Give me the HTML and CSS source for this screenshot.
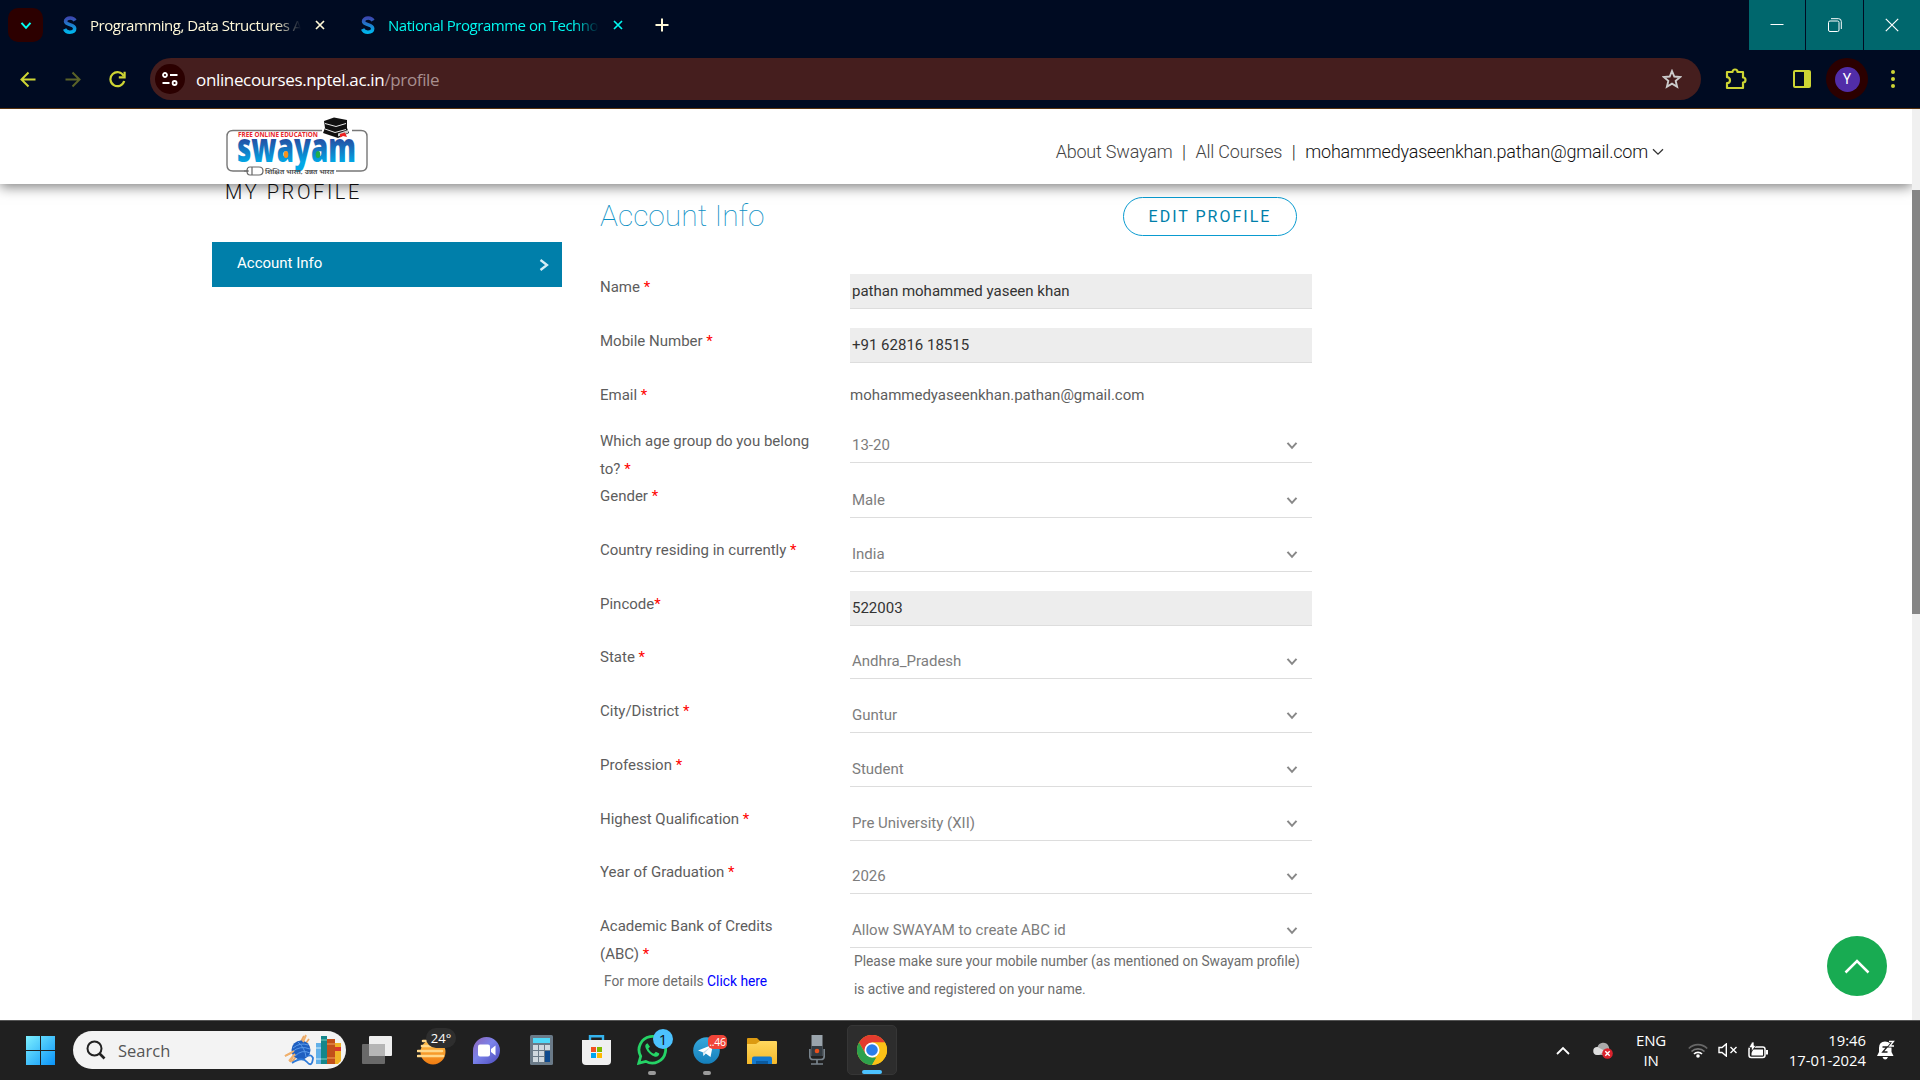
FILE: index.html
```html
<!DOCTYPE html>
<html lang="en">
<head>
<meta charset="utf-8">
<title>Profile</title>
<link rel="stylesheet" href="styles.css">
</head>
<body>
<svg width="0" height="0" class="defs">
  <defs>
    <linearGradient id="sblue" x1="0" y1="0" x2="0" y2="1"><stop offset="0" stop-color="#3b49b0"/><stop offset="1" stop-color="#00b4ec"/></linearGradient>
    <linearGradient id="wordmark" x1="0" y1="0" x2="0" y2="1"><stop offset=".3" stop-color="#2b3f98"/><stop offset=".8" stop-color="#00a8e6"/></linearGradient>
    <linearGradient id="win" x1="0" y1="0" x2="1" y2="1"><stop offset="0" stop-color="#7df0ff"/><stop offset="1" stop-color="#0a93f8"/></linearGradient>
    <linearGradient id="sun" x1="0" y1="0" x2="0" y2="1"><stop offset="0" stop-color="#ffc24a"/><stop offset="1" stop-color="#f07c12"/></linearGradient>
    <linearGradient id="chat" x1="0" y1="0" x2="1" y2="1"><stop offset="0" stop-color="#8f62b4"/><stop offset=".45" stop-color="#7b83eb"/><stop offset="1" stop-color="#4a49ba"/></linearGradient>
    <linearGradient id="tele" x1="0" y1="0" x2="0" y2="1"><stop offset="0" stop-color="#36a8dc"/><stop offset="1" stop-color="#157fbb"/></linearGradient>
    <linearGradient id="fold" x1="0" y1="0" x2="0" y2="1"><stop offset="0" stop-color="#ffd75e"/><stop offset="1" stop-color="#f5b92a"/></linearGradient>
    <symbol id="vee" viewBox="0 0 12 10"><path d="M1.500 2.800 6 7.800 10.500 2.800" fill="none" stroke="currentColor" stroke-width="2"/></symbol>
    <symbol id="ess" viewBox="0 0 14 18"><path d="M12 4.600C11 2.600 9.200 2 7.200 2 4.600 2 2.500 3.200 2.500 5.300 2.500 9.500 11.700 7.800 11.700 12.600 11.700 15 9.500 16.200 6.800 16.200 4.300 16.200 2.500 15.200 1.600 13" fill="none" stroke="url(#sblue)" stroke-width="3.500"/></symbol>
    <symbol id="cross" viewBox="0 0 10 10"><path d="M1 1 9 9M9 1 1 9" fill="none" stroke="currentColor" stroke-width="1.700"/></symbol>
  </defs>
</svg>

<div class="browser">
  <div class="tabstrip">
    <div class="tab-search"><svg width="12" height="10"><use href="#vee"/></svg></div>
    <div class="tab">
      <svg width="14" height="18"><use href="#ess"/></svg>
      <span class="tab-title">Programming, Data Structures And</span>
      <svg class="close" width="10" height="10"><use href="#cross"/></svg>
    </div>
    <div class="tab active">
      <svg width="14" height="18"><use href="#ess"/></svg>
      <span class="tab-title">National Programme on Technology</span>
      <svg class="close" width="10" height="10"><use href="#cross"/></svg>
    </div>
    <svg class="new-tab" width="14" height="14" viewBox="0 0 14 14"><path d="M7 0.500V13.500M.5 7H13.500" stroke="#fff9d8" stroke-width="2"/></svg>
    <div class="win-buttons">
      <div class="win-button"><svg width="14" height="14" viewBox="0 0 14 14"><path d="M.5 6.500H13.500" stroke="#fff"/></svg></div>
      <div class="win-button"><svg width="14" height="14" viewBox="0 0 14 14" fill="none" stroke="#fff"><rect x=".5" y="3" width="10.500" height="10.500" rx="1.500"/><path d="M3 .7H10.500Q13.300 .7 13.300 3.500V11"/></svg></div>
      <div class="win-button"><svg width="14" height="14" viewBox="0 0 14 14"><path d="M.8 .8 13.200 13.200M13.200 .8 .8 13.200" stroke="#fff" stroke-width="1.200"/></svg></div>
    </div>
  </div>
  <div class="toolbar">
    <svg class="back" width="16" height="17" viewBox="0 0 16 17" fill="none" stroke="#cdd534" stroke-width="2"><path d="M15.500 8.500H2M8.500 1.500 1.500 8.500 8.500 15.500"/></svg>
    <svg class="forward" width="16" height="17" viewBox="0 0 16 17" fill="none" stroke="#5b6328" stroke-width="2"><path d="M.5 8.500H14M7.500 1.500 14.500 8.500 7.500 15.500"/></svg>
    <svg class="reload" width="17" height="17" viewBox="0 0 17 17" fill="none" stroke="#cdd534" stroke-width="2.200"><path d="M14.700 5A7 7 0 1 0 15.200 10"/><path d="M15.600 .8V6.400H9.800"/></svg>
    <div class="address">
      <div class="site-info"><svg width="16" height="14" viewBox="0 0 16 14" fill="none" stroke="#fff" stroke-width="1.800"><circle cx="3" cy="3" r="2"/><path d="M8 3H15.500M.5 11H7.500"/><circle cx="12.600" cy="11" r="2"/></svg></div>
      <span class="url">onlinecourses.nptel.ac.in<span class="path">/profile</span></span>
      <svg class="star" width="20" height="20" viewBox="0 0 20 20"><path d="M10 2 12.300 7.500 18.300 8 13.700 11.900 15.100 17.700 10 14.600 4.900 17.700 6.300 11.900 1.700 8 7.700 7.500Z" fill="none" stroke="#ccc" stroke-width="1.900"/></svg>
    </div>
    <svg class="puzzle" width="22" height="22" viewBox="0 0 22 22"><path d="M2 4H7.500A2.400 2.400 0 0 1 12.500 4H18V9.500A2.400 2.400 0 0 1 18 14.500V20H2V15.200A3 3 0 0 0 2 9.200Z" fill="none" stroke="#cdd534" stroke-width="2.200" stroke-linejoin="round"/></svg>
    <svg class="panel" width="18" height="18" viewBox="0 0 18 18"><rect x="1" y="1" width="16" height="16" rx="1" fill="none" stroke="#cdd534" stroke-width="2"/><path d="M11 1H17V17H11Z" fill="#cdd534"/></svg>
    <div class="avatar"><span>Y</span></div>
    <svg class="dots" width="4" height="18" viewBox="0 0 4 18" fill="#cdd534"><circle cx="2" cy="2" r="2"/><circle cx="2" cy="9" r="2"/><circle cx="2" cy="16" r="2"/></svg>
  </div>
</div>

<div class="viewport">
  <div class="page">
    <header class="site-header">
      <svg class="logo" width="144" height="62" viewBox="0 0 144 62">
        <path d="M96 14.500H7Q1 14.500 1 20.500V49Q1 55 7 55H22M110 55H135Q141 55 141 49V20.500Q141 14.500 135 14.500H126" fill="none" stroke="#777" stroke-width="1.400"/>
        <text class="logo-top" x="12" y="21" textLength="80" lengthAdjust="spacingAndGlyphs">FREE ONLINE EDUCATION</text>
        <text class="logo-word" x="11" y="45.500" textLength="119" lengthAdjust="spacingAndGlyphs">swayam</text>
        <ellipse cx="60" cy="38.500" rx="2.300" ry="3.500" fill="#f7931e"/><ellipse cx="92" cy="38.500" rx="2.300" ry="3.500" fill="#22ac4a"/>
        <path d="M98 5 108 1.500 121 4V12L123 17 112 22 97 17 99 12Z" fill="#111"/>
        <path d="M99 7.500 110 10.500 120 7.500M99 13 109 16.500 120 13.500" stroke="#fff" stroke-width=".9" fill="none"/>
        <path d="M112 20.500V17.500L122 14V17Z" fill="#ccc"/>
        <path d="M114 18 119 16.500 121 21 117 20 114 21.500Z" fill="#e22"/>
        <path d="M24 51H33Q37 51 37 55T33 59H24Q21 59 21 55T24 51ZM26 51V59M18 55H23" fill="none" stroke="#666" stroke-width="1.200"/>
        <text class="logo-tag" x="39" y="57.500" textLength="69" lengthAdjust="spacingAndGlyphs">शिक्षित भारत, उन्नत भारत</text>
      </svg>
      <nav class="site-nav">
        <span class="nav-about">About Swayam</span><span class="bar">|</span><span class="nav-courses">All Courses</span><span class="bar">|</span><span class="nav-user">mohammedyaseenkhan.pathan@gmail.com</span>
        <svg width="12" height="8" viewBox="0 0 12 8"><path d="M1 1.200 6 6.200 11 1.200" fill="none" stroke="#333" stroke-width="1.300"/></svg>
      </nav>
    </header>

    <main class="content">
      <aside class="sidebar">
        <h1>MY PROFILE</h1>
        <div class="side-item"><span>Account Info</span><svg width="10" height="14" viewBox="0 0 10 14"><path d="M1.500 2 8 7 1.500 12" fill="none" stroke="#d5eef5" stroke-width="2.300"/></svg></div>
      </aside>
      <section class="form">
        <div class="form-head"><h2>Account Info</h2><div class="edit">EDIT PROFILE</div></div>
        <div class="row"><div class="label">Name <i>*</i></div><div class="field filled">pathan mohammed yaseen khan</div></div>
        <div class="row"><div class="label">Mobile Number <i>*</i></div><div class="field filled">+91 62816 18515</div></div>
        <div class="row h46"><div class="label">Email <i>*</i></div><div class="plain">mohammedyaseenkhan.pathan@gmail.com</div></div>
        <div class="row h55"><div class="label">Which age group do you belong to? <i>*</i></div><div class="field">13-20<svg width="12" height="10"><use href="#vee"/></svg></div></div>
        <div class="row"><div class="label">Gender <i>*</i></div><div class="field">Male<svg width="12" height="10"><use href="#vee"/></svg></div></div>
        <div class="row"><div class="label">Country residing in currently <i>*</i></div><div class="field">India<svg width="12" height="10"><use href="#vee"/></svg></div></div>
        <div class="row h53"><div class="label">Pincode<i>*</i></div><div class="field filled">522003</div></div>
        <div class="row"><div class="label">State <i>*</i></div><div class="field">Andhra_Pradesh<svg width="12" height="10"><use href="#vee"/></svg></div></div>
        <div class="row"><div class="label">City/District <i>*</i></div><div class="field">Guntur<svg width="12" height="10"><use href="#vee"/></svg></div></div>
        <div class="row"><div class="label">Profession <i>*</i></div><div class="field">Student<svg width="12" height="10"><use href="#vee"/></svg></div></div>
        <div class="row h53"><div class="label">Highest Qualification <i>*</i></div><div class="field">Pre University (XII)<svg width="12" height="10"><use href="#vee"/></svg></div></div>
        <div class="row"><div class="label">Year of Graduation <i>*</i></div><div class="field">2026<svg width="12" height="10"><use href="#vee"/></svg></div></div>
        <div class="row">
          <div class="label">Academic Bank of Credits<br>(ABC) <i>*</i><div class="details">For more details <a>Click here</a></div></div>
          <div><div class="field">Allow SWAYAM to create ABC id<svg width="12" height="10"><use href="#vee"/></svg></div>
          <div class="help">Please make sure your mobile number (as mentioned on Swayam profile)<br>is active and registered on your name.</div></div>
        </div>
      </section>
    </main>
    <div class="to-top"><svg width="26" height="15" viewBox="0 0 26 15"><path d="M1.500 13.500 13 2 24.500 13.500" fill="none" stroke="#fff" stroke-width="2.500"/></svg></div>
  </div>
  <div class="scrollbar"><div class="thumb"></div></div>
</div>

<div class="taskbar">
  <svg class="start" width="29" height="29" viewBox="0 0 29 29"><path d="M0 0H14V14H0ZM15 0H29V14H15ZM0 15H14V29H0ZM15 15H29V29H15Z" fill="url(#win)"/></svg>
  <div class="search">
    <svg width="20" height="20" viewBox="0 0 20 20" fill="none" stroke="#222" stroke-width="2"><circle cx="8.500" cy="8.500" r="7"/><path d="M13.500 13.500 18.500 18.500" stroke-width="2.600"/></svg>
    <span>Search</span>
    <svg class="art" width="57" height="32" viewBox="0 0 57 32">
      <path d="M20 2 6 28M25 5 8 28M1 22 24 11" stroke="#e9a765" stroke-width="1.800"/><circle cx="17" cy="16" r="9.500" fill="#1f5fc0"/><path d="M9 14Q16 8 24 11M8 18Q16 11 26 15M11 22Q18 15 26 19M14 8Q21 14 22 23" stroke="#5b9bea" fill="none"/>
      <path d="M8 29Q18 22 23 28T29 24Q27 20 24 22" fill="none" stroke="#2e7bd9" stroke-width="1.800"/><path d="M22 1 19 8M1 22 10 17M5 27 11 20" stroke="#f0b06c" stroke-width="2"/>
      <path d="M32 9H37V30H32Z" fill="#62b0e8"/><path d="M37 2H43V30H37Z" fill="#14868a"/><path d="M43 5H51V30H43Z" fill="#c2501a"/><path d="M51 9H57V27L54 30H51Z" fill="#f1b327"/><path d="M37 6H43M37 25H43" stroke="#7ed0c0"/><path d="M43 10H51M43 24H51" stroke="#f2a25d"/><path d="M51 13H57V17H51Z" fill="#d8382e"/><path d="M32 14H37M32 25H37" stroke="#d5effb"/>
    </svg>
  </div>
  <div class="apps">
    <div class="app"><svg width="30" height="28" viewBox="0 0 30 28"><rect x="7" width="23" height="20" rx="1" fill="#eee"/><rect y="8" width="23" height="20" rx="1" fill="#777" opacity=".85"/><path d="M7 8H23V20H7Z" fill="#b5b5b5"/></svg></div>
    <div class="app"><svg width="30" height="30" viewBox="0 0 30 30"><circle cx="16" cy="17" r="12.500" fill="url(#sun)"/><path d="M6 6H12M5 11H17M1 16H25M1 21H14M8 21H26" stroke="#ffd88a" stroke-width="2.600" stroke-linecap="round"/></svg><span class="temp">24°</span></div>
    <div class="app"><svg width="29" height="29" viewBox="0 0 29 29"><path d="M1 28V14.500A13.500 13.500 0 1 1 14.500 28Z" fill="url(#chat)"/><rect x="6" y="8.500" width="12" height="12" rx="2" fill="#fff"/><path d="M19 13 23.500 9.500V19.500L19 16Z" fill="#fff"/></svg></div>
    <div class="app"><svg width="23" height="30" viewBox="0 0 23 30"><rect width="23" height="30" rx="1.500" fill="#6a7a88"/><rect x="3" y="3" width="17" height="5" fill="#4fd8f8"/><path d="M3 10H8V15H3ZM9 10H14V15H9ZM15 10H20V15H15ZM3 16H8V21H3ZM9 16H14V21H9ZM3 22H8V27H3ZM9 22H14V27H9Z" fill="#cfd8df"/><path d="M15 16H20V27H15Z" fill="#0e4a8e"/></svg></div>
    <div class="app"><svg width="29" height="30" viewBox="0 0 29 30"><path d="M8 7V1.200H21V7" fill="none" stroke="#35b4ee" stroke-width="2.400"/><path d="M0 5H29V26Q29 30 25 30H4Q0 30 0 26Z" fill="#f0f0f0"/><path d="M9 12H14V17H9Z" fill="#f25022"/><path d="M15 12H20V17H15Z" fill="#7fba00"/><path d="M9 18H14V23H9Z" fill="#00a4ef"/><path d="M15 18H20V23H15Z" fill="#ffb900"/></svg></div>
    <div class="app run"><svg width="30" height="30" viewBox="0 0 30 30"><path d="M1.800 28.200 3.700 21.300A13.300 13.300 0 1 1 8.800 26.400Z" fill="none" stroke="#25d366" stroke-width="2.800"/><path d="M10.500 8.200C8.400 8.700 7.700 10.800 8.800 13.200 10.700 17.300 14 20.600 18 21.700 20.200 22.300 22.300 20.800 22.300 18.600L18.800 16.800 17 18.800C14.500 17.900 12.500 16 11.300 13.500L13 11.700Z" fill="#25d366"/></svg><span class="badge">1</span></div>
    <div class="app run"><svg width="27" height="27" viewBox="0 0 27 27"><circle cx="13.500" cy="13.500" r="13.300" fill="url(#tele)"/><path d="M5 13.500 20 7.500 17.500 20 12.800 16.600 10.500 19 9.800 15.200Z" fill="#fff"/><path d="M10 15.200 18 9.500 11.500 16.200 10.500 19Z" fill="#c5dcea"/></svg><span class="badge-red">..46</span></div>
    <div class="app"><svg width="30" height="27" viewBox="0 0 30 27"><path d="M0 2Q0 1 1 1H10L13 4V9H0Z" fill="#dc9a11"/><path d="M0 7H9L13 4H29Q30 4 30 5V26Q30 27 29 27H0Z" fill="url(#fold)"/><path d="M5 27V21.500Q5 19.500 7 19.500H23Q25 19.500 25 21.500V27Z" fill="#1379cf"/><path d="M9 27V24H21V27" fill="#0b5a9f"/></svg></div>
    <div class="app"><svg width="16" height="30" viewBox="0 0 16 30"><path d="M2.500 0H13.500V21H2.500Z" fill="#9aa4ac"/><path d="M2.500 11H13.500V21H2.500Z" fill="#333b42"/><circle cx="8" cy="16" r="2.300" fill="#e9501c"/><path d="M.8 14V21Q.8 24.500 4 24.500H12Q15.200 24.500 15.200 21V14M8 25V29M2 29H14" fill="none" stroke="#78838c" stroke-width="1.700"/></svg></div>
    <div class="app run current"><svg width="30" height="30" viewBox="0 0 30 30"><circle cx="15" cy="15" r="15" fill="#fbc116"/><path d="M2 7.500A15 15 0 0 1 28 7.500H15L8.500 18.800Z" fill="#e33b2e"/><path d="M2 7.500 8.500 18.800 15 22.500H19.500L15 30A15 15 0 0 1 2 7.500Z" fill="#2da14c"/><path d="M15 7.500H28A15 15 0 0 1 15 30L21.500 18.800Z" fill="#fbc116"/><circle cx="15" cy="15" r="7.500" fill="#fff"/><circle cx="15" cy="15" r="5.800" fill="#2a7de9"/></svg></div>
  </div>
  <div class="tray">
    <svg width="14" height="9" viewBox="0 0 14 9"><path d="M1 8 7 2 13 8" fill="none" stroke="#fff" stroke-width="1.800"/></svg>
    <svg class="cloud" width="20" height="17" viewBox="0 0 20 17"><path d="M4 13A4.300 4.300 0 0 1 4.500 5 6 6 0 0 1 15.500 4Q17 7 16 13Z" fill="#aaa"/><path d="M4 13A4 4 0 0 1 4.500 5L12 9 6 13Z" fill="#ddd"/><circle cx="14.500" cy="11.500" r="5.300" fill="#d9222c"/><path d="M12.300 9.300 16.700 13.700M16.700 9.300 12.300 13.700" stroke="#fff" stroke-width="1.400"/></svg>
    <div class="lang">ENG<br>IN</div>
    <svg class="wifi" width="20" height="16" viewBox="0 0 20 16" fill="none" stroke-width="1.700"><path d="M.8 6.500A13 13 0 0 1 19.200 6.500" stroke="#666"/><path d="M3.500 9.500A9.300 9.300 0 0 1 16.500 9.500" stroke="#777"/><path d="M6 12A5.600 5.600 0 0 1 14 12" stroke="#fff"/><circle cx="10" cy="14" r="1.800" fill="#fff"/></svg>
    <svg class="speaker" width="20" height="14" viewBox="0 0 20 14" fill="none" stroke="#fff" stroke-width="1.400"><path d="M1 4.500H4L8.300 .9V13.100L4 9.500H1Z"/><path d="M12.500 4 18.500 10M18.500 4 12.500 10"/></svg>
    <svg class="battery" width="20" height="17" viewBox="0 0 20 17"><rect x="1" y="5" width="16" height="10.500" rx="2.200" fill="none" stroke="#fff" stroke-width="1.500"/><path d="M5 7.500H15V13.500H3.500V11Z" fill="#fff"/><path d="M18 8H20V12.500H18Z" fill="#fff"/><path d="M4 0H6V3.500H8L3.500 9.500V5.500H1Z" fill="#fff" stroke="#202020" stroke-width=".7"/></svg>
    <div class="clock">19:46<br>17-01-2024</div>
    <svg class="bell" width="18" height="20" viewBox="0 0 18 20"><path d="M8 1.500Q14.500 1.500 14.500 8V12L16.500 16H0L2 12V8Q2 1.500 8 1.500Z" fill="#fff"/><path d="M5.500 17H11Q10 19.500 8.200 19.500T5.500 17Z" fill="#fff"/><path d="M5.500 7H10L5.800 12H10.500" fill="none" stroke="#202020" stroke-width="1.400"/><path d="M12 1.500H16.500L12.800 6H17" fill="none" stroke="#202020" stroke-width="3"/><path d="M12 1.500H16.500L12.800 6H17" fill="none" stroke="#fff" stroke-width="1.300"/></svg>
  </div>
</div>
</body>
</html>
```
FILE: styles.css
```css
* { box-sizing: border-box; }
body { margin: 0; width: 1920px; height: 1080px; overflow: hidden; background: #fff; font-family: Roboto, sans-serif; display: flex; flex-direction: column; }
svg { display: block; flex: none; }
.defs { position: absolute; }
i { font-style: normal; color: #f00; }

/* browser frame */
.browser { height: 109px; background: #000b22; border-bottom: 1px solid #57320e; font-family: "Open Sans", sans-serif; flex: none; }
.tabstrip { height: 50px; display: flex; align-items: center; padding-left: 8px; }
.tab-search { width: 35px; height: 34px; border-radius: 10px; background: #2c0000; color: #00fff0; display: flex; align-items: center; justify-content: center; }
.tab { display: flex; align-items: center; color: #fff9d8; margin-left: 20px; width: 262px; }
.tab.active { color: #00f8f0; margin-left: 36px; }
.tab-title { width: 211px; margin-left: 13px; font-size: 15px; letter-spacing: -0.470px; line-height: 24px; white-space: nowrap; overflow: hidden; -webkit-mask-image: linear-gradient(90deg, #000 88%, transparent 100%); mask-image: linear-gradient(90deg, #000 88%, transparent 100%); }
.close { margin-left: 14px; }
.new-tab { margin-left: 32px; }
.win-buttons { display: flex; gap: 1px; margin-left: auto; align-self: stretch; }
.win-button { width: 56.300px; background: #00676d; display: flex; align-items: center; justify-content: center; }
.toolbar { height: 58px; display: flex; align-items: center; padding-left: 20px; }
.forward { margin-left: 29px; }
.reload { margin-left: 28px; }
.address { width: 1551px; height: 42px; margin: 0 24px; border-radius: 21px; background: #451e1e; display: flex; align-items: center; padding: 0 19px 0 5px; }
.site-info { width: 30px; height: 30px; border-radius: 50%; background: #2b0000; display: flex; align-items: center; justify-content: center; }
.url { margin-left: 11px; color: #fff; font-size: 17px; letter-spacing: -0.350px; }
.path { color: #a88f8f; }
.star { margin-left: auto; }
.panel { margin-left: 46px; }
.avatar { width: 42px; height: 42px; border-radius: 50%; background: #2b0000; margin-left: 15px; display: flex; align-items: center; justify-content: center; }
.avatar span { width: 25px; height: 25px; border-radius: 50%; background: #512da8; color: #fff; font: 14px/25px Roboto, sans-serif; text-align: center; }
.dots { margin-left: 23px; }

/* page */
.viewport { flex: 1; display: flex; min-height: 0; }
.page { width: 1912px; position: relative; overflow: hidden; }
.site-header { position: relative; z-index: 1; height: 75px; background: #fff; box-shadow: 0 3px 12px rgba(0, 0, 0, .5); padding: 7px 248px 0 226px; display: flex; justify-content: space-between; }
.logo-top { font: bold 6.500px "Open Sans", sans-serif; fill: #e8262c; }
.logo-word { font: 800 40px "Open Sans", sans-serif; fill: url(#wordmark); }
.logo-tag { font: bold 6px "Noto Sans", sans-serif; fill: #555; }
.site-nav { display: flex; align-items: center; padding-top: 9px; height: 62px; font-size: 18px; font-weight: 300; letter-spacing: -0.200px; color: #444; white-space: nowrap; }
.bar { width: 23px; text-align: center; color: #222; }
.nav-user { color: #111; margin-right: 4px; }
.content { display: flex; padding-left: 212px; }
.sidebar { width: 350px; }
h1 { margin: -4px 0 0 13px; font-size: 20px; line-height: 24px; font-weight: 300; letter-spacing: 2.600px; color: #111; }
.side-item { margin-top: 38px; height: 45px; background: #007faa; color: #fff; font-size: 15px; padding: 0 13px 3px 25px; display: flex; align-items: center; justify-content: space-between; }
.side-item svg { margin-top: 4px; }
.form { margin-left: 38px; width: 712px; }
.form-head { height: 88px; display: flex; justify-content: space-between; padding: 13px 15px 0 0; }
h2 { margin: 1px 0 0; font-size: 30px; line-height: 36px; font-weight: 100; color: #0a8fc4; }
.edit { width: 174px; height: 39px; border: 1px solid #0a9bd0; border-radius: 20px; color: #007faa; font-size: 16px; line-height: 37px; letter-spacing: 2px; text-align: center; }
.row { height: 54px; display: grid; grid-template-columns: 250px 462px; align-items: start; font-size: 15px; color: #5d5d5d; }
.h46 { height: 46px; }
.h53 { height: 53px; }
.h55 { height: 55px; }
.label { line-height: 28px; padding: 1px 30px 0 0; }
.field { margin-top: 2px; height: 35px; border-bottom: 1px solid #ddd; padding: 0 14px 0 2px; line-height: 35px; color: #7d7d7d; display: flex; align-items: center; justify-content: space-between; }
.field.filled { background: #ededed; color: #333; }
.plain { line-height: 28px; padding-top: 1px; }
.field svg { color: #888; }
.details { font-size: 13.800px; line-height: 27px; padding-left: 4px; color: #6d6d6d; }
.details a { color: #00f; }
.help { margin-top: -1px; font-size: 13.770px; line-height: 28px; padding-left: 4px; color: #6d6d6d; white-space: nowrap; }
.to-top { position: absolute; right: 25px; bottom: 24px; width: 60px; height: 60px; border-radius: 50%; background: #18ab52; display: flex; align-items: center; justify-content: center; }
.scrollbar { width: 8px; background: #f0f0f0; padding-top: 81px; }
.thumb { height: 424px; background: #858585; }

/* taskbar */
.taskbar { height: 60px; flex: none; background: #202020; border-top: 1px solid #555; display: flex; align-items: center; padding: 0 0 1px 26px; color: #fff; font-family: "Open Sans", sans-serif; }
.search { margin-left: 18px; width: 273px; height: 38px; border-radius: 19px; background: #f3f3f3; display: flex; align-items: center; padding: 0 5px 0 13px; font-size: 16.500px; color: #555; }
.search span { margin-left: 12px; }
.art { margin-left: auto; }
.apps { display: flex; margin-left: 3px; }
.app { width: 55px; height: 50px; display: flex; align-items: center; justify-content: center; position: relative; }
.temp { position: absolute; left: 22px; top: 3px; width: 30px; height: 20px; border-radius: 10px; background: #2e2e2e; font-size: 13px; line-height: 20px; text-align: center; }
.badge { position: absolute; left: 29px; top: 4px; width: 20px; height: 20px; border-radius: 50%; background: #4cc2ff; color: #111; font-size: 15px; line-height: 20px; text-align: center; }
.badge-red { position: absolute; left: 29px; top: 10px; width: 19px; height: 14px; border-radius: 5px; background: #f04438; font-size: 10.500px; line-height: 14px; text-align: center; letter-spacing: -0.3px; }
.run::after { content: ""; position: absolute; bottom: 0; left: 24px; width: 8px; height: 4px; border-radius: 2px; background: #9a9a9a; }
.current { width: 50px; margin-left: 3px; background: #2d2d2d; border: 1px solid #363636; border-radius: 5px; }
.current::after { left: 14px; bottom: 0; width: 20px; background: #4cc2ff; }
.tray { margin-left: auto; display: flex; align-items: center; padding-right: 25px; }
.cloud { margin-left: 23px; }
.lang { margin-left: 17px; width: 42px; text-align: center; font-size: 15px; letter-spacing: -0.200px; line-height: 20px; }
.wifi { margin-left: 16px; }
.speaker { margin-left: 10px; }
.battery { margin-left: 10px; }
.clock { margin-left: 14px; width: 84px; text-align: right; font-size: 14.800px; line-height: 20px; white-space: nowrap; }
.bell { margin-left: 11px; }
```
